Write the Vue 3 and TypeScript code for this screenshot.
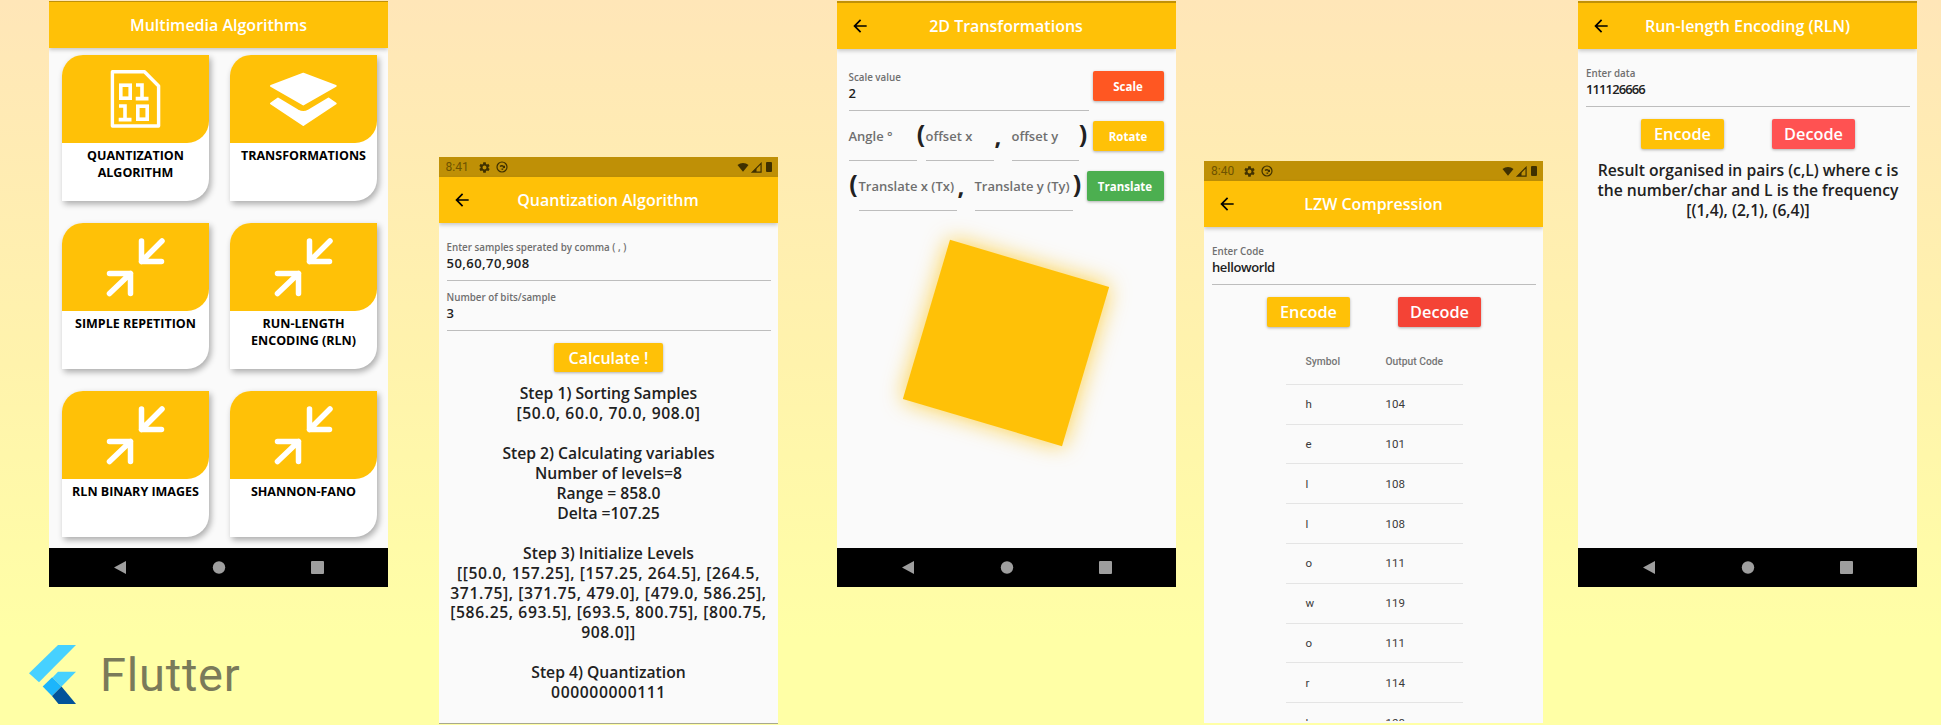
<script setup lang="ts">
interface Card { title: string[]; icon: 'file' | 'layers' | 'compress' }
const cards: Card[] = [
  { title: ['QUANTIZATION', 'ALGORITHM'], icon: 'file' },
  { title: ['TRANSFORMATIONS'], icon: 'layers' },
  { title: ['SIMPLE REPETITION'], icon: 'compress' },
  { title: ['RUN-LENGTH', 'ENCODING (RLN)'], icon: 'compress' },
  { title: ['RLN BINARY IMAGES'], icon: 'compress' },
  { title: ['SHANNON-FANO'], icon: 'compress' },
]
const quantLines: string[] = [
  'Step 1) Sorting Samples', '[50.0, 60.0, 70.0, 908.0]', '\u00a0',
  'Step 2) Calculating variables', 'Number of levels=8', 'Range = 858.0', 'Delta =107.25', '\u00a0',
  'Step 3) Initialize Levels', '[[50.0, 157.25], [157.25, 264.5], [264.5,', '371.75], [371.75, 479.0], [479.0, 586.25],',
  '[586.25, 693.5], [693.5, 800.75], [800.75,', '908.0]]', '\u00a0',
  'Step 4) Quantization', '000000000111',
]
const rows: [string, string][] = [
  ['h', '104'], ['e', '101'], ['l', '108'], ['l', '108'], ['o', '111'],
  ['w', '119'], ['o', '111'], ['r', '114'], ['l', '108'], ['d', '100'],
]
const rlnLines: string[] = [
  'Result organised in pairs (c,L) where c is',
  'the number/char and L is the frequency',
  '[(1,4), (2,1), (6,4)]',
]
const isNumeric = (line: string): boolean => /^[\[\d]/.test(line)
</script>

<template>
  <div class="page">
    <svg class="defs" aria-hidden="true">
      <symbol id="back" viewBox="0 0 24 24"><path d="M20 11H7.83l5.59-5.59L12 4l-8 8 8 8 1.41-1.41L7.83 13H20v-2z" /></symbol>
      <symbol id="gear" viewBox="0 0 24 24"><path d="M19.14 12.94c.04-.3.06-.61.06-.94 0-.32-.02-.64-.07-.94l2.03-1.58c.18-.14.23-.41.12-.61l-1.92-3.32c-.12-.22-.37-.29-.59-.22l-2.39.96c-.5-.38-1.03-.7-1.62-.94l-.36-2.54c-.04-.24-.24-.41-.48-.41h-3.84c-.24 0-.43.17-.47.41l-.36 2.54c-.59.24-1.13.57-1.62.94l-2.39-.96c-.22-.08-.47 0-.59.22L2.74 8.87c-.12.21-.08.47.12.61l2.03 1.58c-.05.3-.09.63-.09.94s.02.64.07.94l-2.03 1.58c-.18.14-.23.41-.12.61l1.92 3.32c.12.22.37.29.59.22l2.39-.96c.5.38 1.03.7 1.62.94l.36 2.54c.05.24.24.41.48.41h3.84c.24 0 .44-.17.47-.41l.36-2.54c.59-.24 1.13-.56 1.62-.94l2.39.96c.22.08.47 0 .59-.22l1.92-3.32c.12-.22.07-.47-.12-.61l-2.01-1.58zM12 15.6c-1.98 0-3.6-1.62-3.6-3.6s1.62-3.6 3.6-3.6 3.6 1.62 3.6 3.6-1.62 3.6-3.6 3.6z" /></symbol>
      <symbol id="sync" viewBox="0 0 24 24"><circle cx="12" cy="12" r="10" fill="none" stroke="currentColor" stroke-width="2.4" /><path d="M7 10c2-3 7-3 9 0l2-1v5h-5l1.5-2c-1.500-1.500-4-1.500-5.500 0zM9 16l6-1.500-1 3.500z" /></symbol>
      <symbol id="wifi" viewBox="0 0 24 24"><path d="M12 21.500L0 6.500C3.500 3.500 7.500 2 12 2s8.500 1.500 12 4.500z" /></symbol>
      <symbol id="signal" viewBox="0 0 24 24"><path d="M3 22L22 3v19z" fill="none" stroke="currentColor" stroke-width="2.600" /><path d="M12 22l0-9L3 22z" /></symbol>
      <symbol id="nav" viewBox="0 0 339 39"><path d="M65 19.500L77 13v13z" /><circle cx="170" cy="19.500" r="6.200" /><rect x="262" y="13" width="13" height="13" rx="1" /></symbol>
    </svg>

    <!-- Phone 1: menu -->
    <section class="phone phone-menu">
      <header class="appbar centered-bar">Multimedia Algorithms</header>
      <div class="screen menu-grid">
        <article v-for="card in cards" :key="card.title.join()" class="card">
          <div class="card-top">
            <svg v-if="card.icon === 'file'" class="card-icon" viewBox="0 0 147 88">
              <path d="M50.400 16.700H82.500L96.600 31V71H50.400Z" fill="none" stroke="#fff" stroke-width="3.400" stroke-linejoin="round" />
              <g fill="none" stroke="#fff" stroke-width="3.600">
                <rect x="58.800" y="30.200" width="9.400" height="13" />
                <path d="M74 30H80V44.800M73.700 43.600H86.500" />
                <path d="M57 51H63V65.800M56.700 64.600H69.500" />
                <rect x="75.800" y="51.200" width="9.400" height="13" />
              </g>
            </svg>
            <svg v-else-if="card.icon === 'layers'" class="card-icon" viewBox="0 0 147 88">
              <g fill="#fff" stroke="#fff" stroke-width="2" stroke-linejoin="round">
                <path d="M73.300 18.700L105.700 31L73.300 49.500L41 31Z" />
                <path d="M48 43.500L68 55.500Q73.300 58.500 78.500 55.500L98.500 43.500L105.700 48.500L73.300 70L41 48.500Z" />
              </g>
            </svg>
            <svg v-else class="card-icon" viewBox="0 0 147 88">
              <g fill="none" stroke="#fff" stroke-width="5.500" stroke-linecap="round" stroke-linejoin="round">
                <path d="M79.500 18V38.500H99.500M79.500 38.500L100 18" />
                <path d="M47.500 50.500H68.500V70.500M68.500 50.500L47.500 70.500" />
              </g>
            </svg>
          </div>
          <div class="card-title"><span v-for="line in card.title" :key="line">{{ line }}</span></div>
        </article>
      </div>
      <svg class="navbar"><use href="#nav" /></svg>
    </section>

    <!-- Phone 2: quantization -->
    <section class="phone phone-quant">
      <div class="statusbar">
        <span class="clock">8:41</span>
        <svg class="st-icon gear"><use href="#gear" /></svg>
        <svg class="st-icon sync"><use href="#sync" /></svg>
        <span class="st-spacer"></span>
        <svg class="st-wifi"><use href="#wifi" /></svg>
        <svg class="st-signal"><use href="#signal" /></svg>
        <span class="st-battery"></span>
      </div>
      <header class="appbar">
        <svg class="back"><use href="#back" /></svg>
        <span class="appbar-title">Quantization Algorithm</span>
      </header>
      <div class="screen quant-body">
        <div class="field"><span class="label">Enter samples sperated by comma ( , )</span><span class="value v-wide">50,60,70,908</span></div>
        <div class="field"><span class="label">Number of bits/sample</span><span class="value">3</span></div>
        <button class="btn btn-calc amber">Calculate !</button>
        <div class="result"><div v-for="(line, i) in quantLines" :key="i" :class="{ numeric: isNumeric(line) }">{{ line }}</div></div>
      </div>
    </section>

    <!-- Phone 3: transformations -->
    <section class="phone phone-trans">
      <header class="appbar">
        <svg class="back"><use href="#back" /></svg>
        <span class="appbar-title">2D Transformations</span>
      </header>
      <div class="screen trans-body">
        <div class="trans-row">
          <div class="field f-scale"><span class="label">Scale value</span><span class="value">2</span></div>
          <button class="btn btn-small w73 orange">Scale</button>
        </div>
        <div class="trans-row">
          <div class="field ph w68"><span class="placeholder">Angle °</span></div>
          <span class="paren w9">(</span>
          <div class="field ph w68"><span class="placeholder">offset x</span></div>
          <span class="comma">,</span>
          <div class="field ph w67"><span class="placeholder">offset y</span></div>
          <span class="paren w9">)</span>
          <button class="btn btn-small w73 amber push">Rotate</button>
        </div>
        <div class="trans-row">
          <span class="paren w10">(</span>
          <div class="field ph w98"><span class="placeholder">Translate x (Tx)</span></div>
          <span class="comma">,</span>
          <div class="field ph w98"><span class="placeholder">Translate y (Ty)</span></div>
          <span class="paren w9">)</span>
          <button class="btn btn-small w79 green push">Translate</button>
        </div>
        <div class="square"></div>
      </div>
      <svg class="navbar"><use href="#nav" /></svg>
    </section>

    <!-- Phone 4: LZW -->
    <section class="phone phone-lzw">
      <div class="statusbar">
        <span class="clock">8:40</span>
        <svg class="st-icon gear"><use href="#gear" /></svg>
        <svg class="st-icon sync"><use href="#sync" /></svg>
        <span class="st-spacer"></span>
        <svg class="st-wifi"><use href="#wifi" /></svg>
        <svg class="st-signal"><use href="#signal" /></svg>
        <span class="st-battery"></span>
      </div>
      <header class="appbar">
        <svg class="back"><use href="#back" /></svg>
        <span class="appbar-title">LZW Compression</span>
      </header>
      <div class="screen lzw-body">
        <div class="field"><span class="label">Enter Code</span><span class="value v-tight">helloworld</span></div>
        <div class="btn-pair">
          <button class="btn btn-big amber">Encode</button>
          <button class="btn btn-big red">Decode</button>
        </div>
        <div class="table">
          <div class="t-row t-head"><span>Symbol</span><span>Output Code</span></div>
          <div v-for="(row, i) in rows" :key="i" class="t-row"><span>{{ row[0] }}</span><span>{{ row[1] }}</span></div>
        </div>
      </div>
    </section>

    <!-- Phone 5: RLN -->
    <section class="phone phone-rln">
      <header class="appbar">
        <svg class="back"><use href="#back" /></svg>
        <span class="appbar-title">Run-length Encoding (RLN)</span>
      </header>
      <div class="screen rln-body">
        <div class="field"><span class="label">Enter data</span><span class="value v-ones">111126666</span></div>
        <div class="btn-pair">
          <button class="btn btn-big amber">Encode</button>
          <button class="btn btn-big red-light">Decode</button>
        </div>
        <div class="result"><div v-for="line in rlnLines" :key="line">{{ line }}</div></div>
      </div>
      <svg class="navbar"><use href="#nav" /></svg>
    </section>

    <div class="flutter">
      <svg class="flutter-mark" viewBox="0 0 47 59">
        <path d="M29 0H47L10 37.300L0 28.300Z" fill="#47d1ff" />
        <path d="M29 26.700H47L32.500 41.500L23.500 32.500Z" fill="#47d1ff" />
        <path d="M13.700 41.500L23.200 32.300L32.500 41.500L23 51Z" fill="#1cb5fb" />
        <path d="M23 51L32.500 41.500L47 59H29.500Z" fill="#02539a" />
      </svg>
      <span class="flutter-word">Flutter</span>
    </div>
  </div>
</template>

<style>
html, body { margin: 0; }
</style>

<style scoped>
.page {
  position: relative;
  width: 1941px;
  height: 725px;
  overflow: hidden;
  display: flex;
  align-items: flex-start;
  padding-left: 49px;
  box-sizing: border-box;
  background: linear-gradient(180deg, #ffe6b8 0%, #fff3ac 50%, #ffffa6 88%);
  font-family: "Open Sans", "Noto Sans", sans-serif;
  color: #212121;
}
.defs { position: absolute; width: 0; height: 0; }

.phone {
  flex: none;
  width: 339px;
  display: flex;
  flex-direction: column;
  background: #fafafa;
  overflow: hidden;
}
.phone-menu { height: 586px; margin-top: 1px; border-top: 1px solid #c09107; box-sizing: border-box; }
.phone-quant { height: 567px; margin-top: 157px; margin-left: 50.500px; border-bottom: 1px solid #a9a98c; box-sizing: border-box; }
.phone-trans { height: 586px; margin-top: 1px; margin-left: 59px; border-top: 2px solid #c09107; box-sizing: border-box; }
.phone-lzw { height: 562px; margin-top: 161px; margin-left: 28.500px; }
.phone-rln { height: 586px; margin-top: 1px; margin-left: 35px; border-top: 2px solid #c09107; box-sizing: border-box; }

.statusbar {
  flex: none;
  height: 20px;
  background: #bf9006;
  display: flex;
  align-items: center;
  padding: 0 6px 0 7px;
  color: #3f3000;
}
.clock { font: 400 12px "Roboto", sans-serif; color: #6e5300; width: 32px; }
.st-icon { width: 13px; height: 13px; fill: currentColor; }
.gear { margin-right: 5px; }
.sync { width: 12px; height: 12px; }
.st-spacer { flex: 1; }
.st-wifi { width: 12px; height: 11px; fill: #3f3000; }
.st-signal { width: 11px; height: 11px; fill: #3f3000; color: #3f3000; margin-left: 2px; }
.st-battery { width: 6px; height: 10px; background: #3f3000; margin-left: 4px; border-radius: 1px; }

.appbar {
  position: relative;
  z-index: 1;
  flex: none;
  height: 46px;
  background: #ffc107;
  box-shadow: 0 2px 4px rgba(0, 0, 0, 0.2);
  display: flex;
  align-items: center;
  color: #fff;
  font-size: 16px;
  font-weight: 600;
}
.centered-bar { justify-content: center; }
.back { position: absolute; left: 13px; top: 13px; width: 20px; height: 20px; fill: #000; }
.appbar-title { width: 100%; text-align: center; }

.screen { flex: 1; min-height: 0; box-sizing: border-box; }

.navbar { flex: none; display: block; width: 339px; height: 39px; background: #000; fill: #9e9e9e; }

.menu-grid {
  display: grid;
  grid-template-columns: 147px 147px;
  grid-auto-rows: 146px;
  column-gap: 21px;
  row-gap: 22px;
  padding: 7px 0 0 13px;
}
.card {
  background: #fff;
  border-radius: 21px 0 22px 0;
  box-shadow: 2px 3px 6px rgba(0, 0, 0, 0.32);
  display: flex;
  flex-direction: column;
}
.card-top {
  flex: none;
  height: 88px;
  background: #ffc107;
  border-radius: 21px 0 22px 0;
}
.card-icon { display: block; width: 147px; height: 88px; }
.card-title {
  display: flex;
  flex-direction: column;
  align-items: center;
  padding-top: 4px;
  font-size: 12.500px;
  line-height: 17px;
  font-weight: 700;
  color: #000;
}

.field {
  flex: none;
  height: 50px;
  box-sizing: border-box;
  display: flex;
  flex-direction: column;
  justify-content: flex-end;
  padding-bottom: 9px;
  border-bottom: 1px solid #bdbdbd;
}
.label { font-size: 9.800px; line-height: 15px; font-weight: 600; color: #6f6f6f; white-space: nowrap; }
.value { font-size: 13px; line-height: 16px; font-weight: 600; color: #212121; }
.v-wide { letter-spacing: 0.47px; }
.v-tight { letter-spacing: -0.4px; }
.v-ones { letter-spacing: -0.9px; }
.ph { padding-bottom: 16px; }
.placeholder { font-size: 13px; line-height: 15px; font-weight: 600; color: #6f6f6f; white-space: nowrap; }

.btn {
  display: block;
  border: 0;
  padding: 0;
  border-radius: 2px;
  color: #fff;
  font-family: inherit;
  font-weight: 600;
  box-shadow: 0 1px 3px rgba(0, 0, 0, 0.3);
}
.amber { background: #ffc107; }
.orange { background: #ff5722; }
.green { background: #4caf50; }
.red { background: #f44336; }
.red-light { background: #ff5252; }
.btn-calc { width: 109px; height: 29px; margin: 12px auto; font-size: 16px; }
.btn-small { height: 30px; font-size: 11.500px; font-weight: 700; }
.btn-big { height: 30px; width: 83px; font-size: 16.300px; }
.w73 { width: 73px; }
.w79 { width: 79px; }
.push { margin-left: 5px; }

.quant-body { padding: 8px 7px 0 8px; }
.result { text-align: center; font-size: 15.700px; line-height: 19.950px; font-weight: 600; white-space: nowrap; color: #212121; }
.numeric { letter-spacing: 0.6px; }

.trans-body { padding: 12px 12px 0 12px; display: flex; flex-direction: column; }
.trans-row { display: flex; align-items: center; height: 50px; flex: none; }
.f-scale { width: 240px; margin-right: 4px; }
.w68 { width: 68px; }
.w67 { width: 67px; }
.w98 { width: 98px; }
.paren { flex: none; font-size: 25px; font-weight: 700; line-height: 1; text-align: center; color: #212121; margin-top: -5px; }
.w9 { width: 9px; }
.w10 { width: 10px; }
.comma { flex: none; width: 18px; padding-left: 1px; box-sizing: border-box; text-align: left; font-size: 24px; font-weight: 700; line-height: 1; color: #212121; }
.square {
  flex: none;
  width: 166px;
  height: 166px;
  margin: 49px auto 0;
  background: #ffc107;
  transform: rotate(16.500deg);
  box-shadow: 0 0 22px rgba(255, 193, 7, 0.75);
}

.lzw-body { padding: 8px 7px 0 8px; }
.btn-pair { display: flex; justify-content: center; gap: 48px; margin-top: 12px; }
.table { width: 177px; height: 376px; margin: 18px auto 0; overflow: hidden; font-family: "Roboto", sans-serif; }
.t-row {
  display: grid;
  grid-template-columns: 80px 77px;
  padding-left: 20px;
  height: 39.800px;
  box-sizing: border-box;
  align-items: center;
  border-bottom: 1px solid #e4e4e4;
  font-size: 11.500px;
  color: #3a3a3a;
}
.t-head { font-size: 10.300px; font-weight: 500; color: #757575; padding-bottom: 6px; }

.rln-body { padding: 8px 7px 0 8px; }
.rln-body .btn-pair { margin-top: 12px; margin-bottom: 12px; }

.flutter {
  position: absolute;
  left: 29px;
  top: 645px;
  display: flex;
  align-items: center;
  gap: 24px;
}
.flutter-mark { width: 47px; height: 59px; display: block; }
.flutter-word { font-family: "Roboto", sans-serif; font-size: 47px; line-height: 59px; color: #7a7a5a; letter-spacing: 0.8px; }
</style>
